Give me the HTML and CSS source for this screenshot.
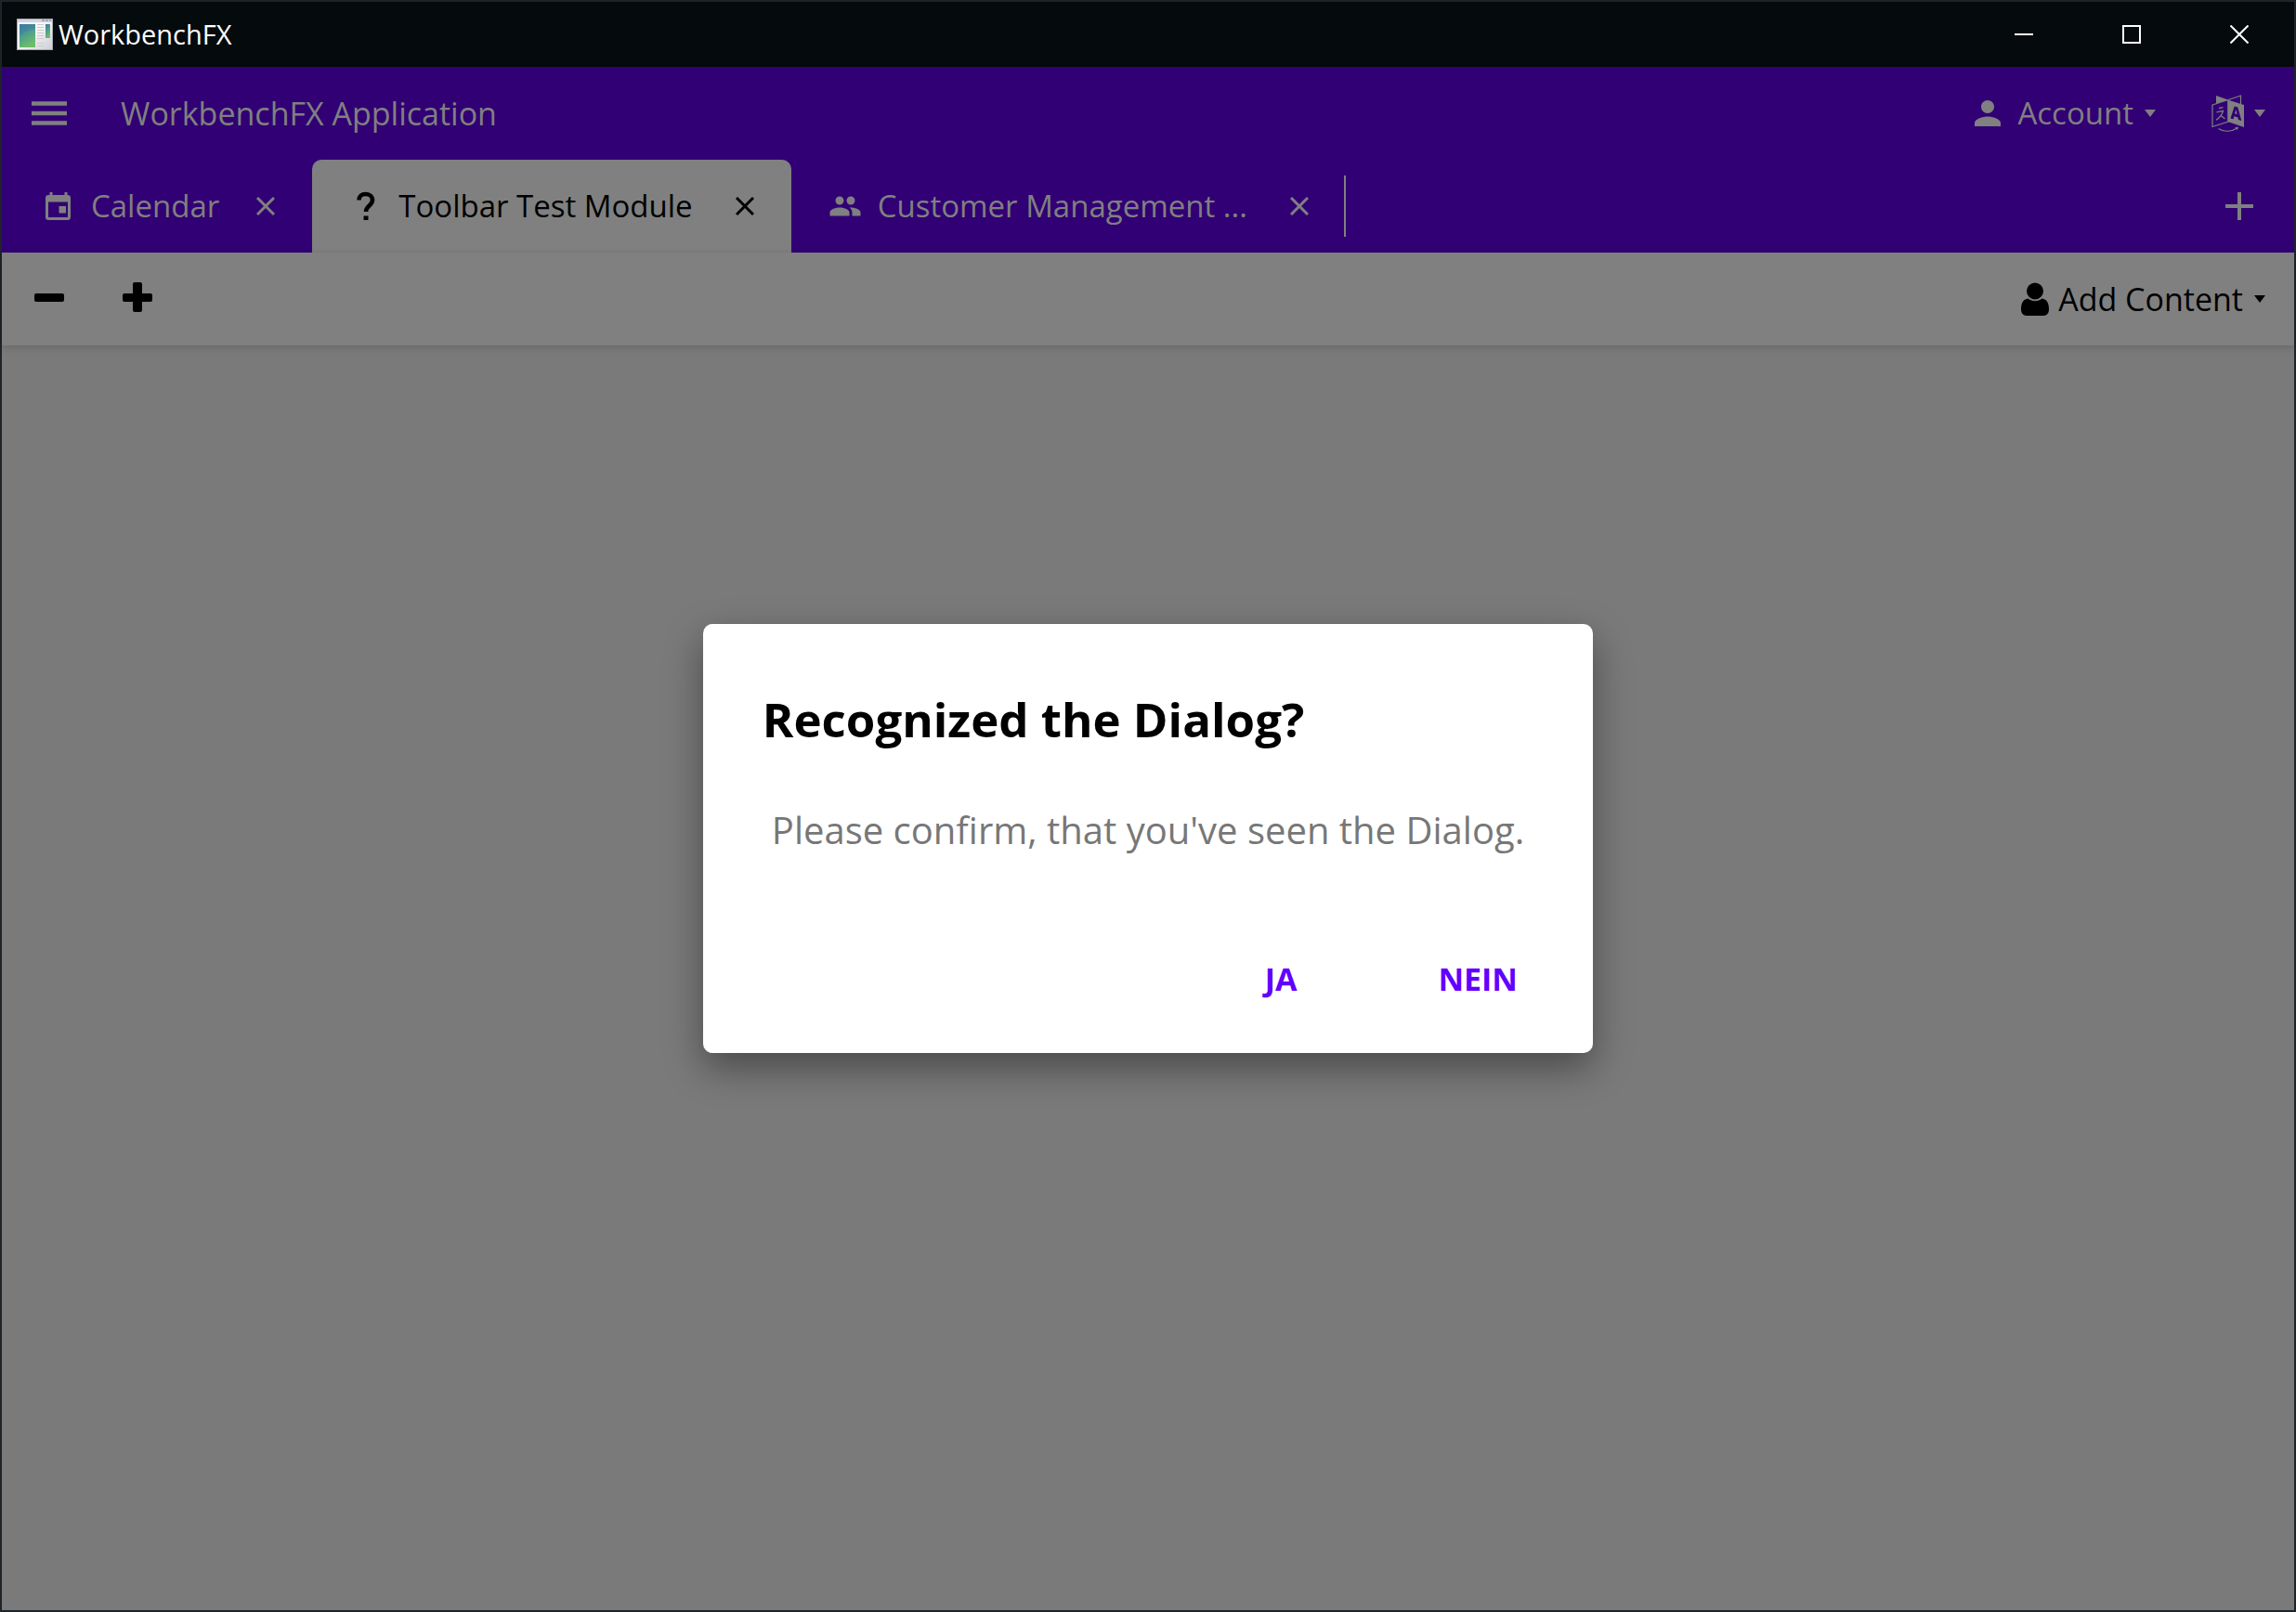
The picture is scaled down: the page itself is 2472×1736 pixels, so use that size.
FILE: index.html
```html
<!DOCTYPE html>
<html lang="en">
<head>
<meta charset="utf-8">
<title>WorkbenchFX</title>
<link rel="stylesheet" href="styles.css">
</head>
<body>
<div class="window">
  <header class="titlebar">
    <svg class="app-icon" viewBox="0 0 39 34" aria-hidden="true">
      <defs>
        <linearGradient id="pane" x1="0" y1="0" x2="0.4" y2="1"><stop offset="0" stop-color="#3f78a0"/><stop offset="0.45" stop-color="#4a9a90"/><stop offset="1" stop-color="#6dbd6c"/></linearGradient>
        <linearGradient id="frame" x1="0" y1="0" x2="1" y2="1"><stop offset="0.4" stop-color="#fafafa"/><stop offset="1" stop-color="#cdced4"/></linearGradient>
      </defs>
      <rect x="0.5" y="0.5" width="38" height="33" fill="url(#frame)" stroke="#a9a9b3"/>
      <rect x="1" y="1" width="37" height="3" fill="#d3d4de"/>
      <path d="M27 2h3M31 2h3M35 2h2" stroke="#a8a4b4" stroke-width="2"/>
      <rect x="3" y="6" width="17" height="25" fill="url(#pane)"/>
      <path d="M3 19C9 13 14 12 20 11V6H3z" fill="#3d7aa6" opacity="0.45"/>
      <path d="M22 6.500h7M22 9.500h7M22 12.500h7M22 15.500h7M22 18.500h7M22 21.500h7M22 26.500h7M22 29.500h7" stroke="#cccccf"/>
      <rect x="31" y="6" width="5" height="15" fill="url(#pane)"/>
    </svg>
    <h1 class="titlebar-text">WorkbenchFX</h1>
    <div class="window-buttons">
      <button class="window-button" aria-label="Minimize"><svg viewBox="0 0 20 20"><path d="M0 10h20"/></svg></button>
      <button class="window-button" aria-label="Maximize"><svg viewBox="0 0 20 20"><path d="M1 1h18v18H1z"/></svg></button>
      <button class="window-button" aria-label="Close"><svg viewBox="0 0 20 20"><path d="M0.500 0.500l19 19M19.500 0.500l-19 19"/></svg></button>
    </div>
  </header>

  <div class="workbench">
    <div class="appbar">
      <button class="menu-button" aria-label="Menu"><svg viewBox="0 0 38 26"><path d="M0 2.500h38M0 13h38M0 23.500h38" stroke="currentColor" stroke-width="4.400"/></svg></button>
      <span class="app-title">WorkbenchFX Application</span>
      <button class="dropdown account">
        <svg class="icon-account" viewBox="4 4 16 16"><path d="M12 12c2.210 0 4-1.790 4-4s-1.790-4-4-4-4 1.790-4 4 1.790 4 4 4zm0 2c-2.670 0-8 1.340-8 4v2h16v-2c0-2.660-5.330-4-8-4z"/></svg>
        <span>Account</span>
        <svg class="caret" viewBox="0 0 12 8"><path d="M0 0h12L6 8z"/></svg>
      </button>
      <button class="dropdown language" aria-label="Language">
        <svg class="icon-language" viewBox="0 0 36 40">
          <path d="M5 1l13 4.500-13 4z"/>
          <path d="M18 5.500L31.500 1v9M1 11l17-5.500V29L1 34.500z" fill="none" stroke="currentColor" stroke-width="1.200"/>
          <path d="M17.500 5.500L35 11V35L17.500 29z"/>
          <path class="cutout" fill-rule="evenodd" d="M20.500 25.500l4.200-13 3.600 1 4 14.500-3.200-.9-.7-2.600-4.100-1.200-.7 3zM25 20.200l2.700.8-1.300-5z"/>
          <path d="M8 14.500l4.500-.8M5.500 18.800l7-1.500c-1 4-4 7.500-7.500 10M9.500 22l5 4" fill="none" stroke="currentColor" stroke-width="1.300"/>
          <path d="M7.500 36.500c6 4 14 3.500 20-.5" fill="none" stroke="currentColor" stroke-width="1.100"/>
          <path d="M25 35.500l4-1-1 3.500z"/>
        </svg>
        <svg class="caret" viewBox="0 0 12 8"><path d="M0 0h12L6 8z"/></svg>
      </button>
    </div>

    <nav class="tabs">
      <div class="tab">
        <svg class="tab-icon" viewBox="0 0 36 36"><path d="M26 18h-7.500v7.500H26zM24.500 3v3h-13V3h-3v3H7c-1.700 0-3 1.300-3 3v21c0 1.700 1.300 3 3 3h21c1.700 0 3-1.300 3-3V9c0-1.700-1.300-3-3-3h-.5V3zM28 30H7V13.500h21z"/></svg>
        <a class="tab-name" href="#calendar">Calendar</a>
        <button class="tab-close" aria-label="Close Calendar"><svg viewBox="0 0 20 20"><path d="M1 1l18 18M19 1L1 19"/></svg></button>
      </div>
      <div class="tab tab-active">
        <svg class="tab-icon" viewBox="0 0 36 36"><path d="M10.500 11.500C10.500 7.500 13.500 5 17.500 5s7.500 2.500 7.500 6.500c0 5.500-7 6.500-7 12.500" fill="none" stroke="currentColor" stroke-width="4.600"/><path d="M15.500 28.500h5V33h-5z"/></svg>
        <a class="tab-name" href="#toolbar">Toolbar Test Module</a>
        <button class="tab-close" aria-label="Close Toolbar Test Module"><svg viewBox="0 0 20 20"><path d="M1 1l18 18M19 1L1 19"/></svg></button>
      </div>
      <div class="tab tab-last">
        <svg class="tab-icon" viewBox="0 0 24 24"><path d="M16 11c1.660 0 2.990-1.340 2.990-3S17.660 5 16 5c-1.660 0-3 1.340-3 3s1.340 3 3 3zm-8 0c1.660 0 2.990-1.340 2.990-3S9.660 5 8 5C6.340 5 5 6.340 5 8s1.340 3 3 3zm0 2c-2.330 0-7 1.170-7 3.500V19h14v-2.500c0-2.330-4.670-3.500-7-3.500zm8 0c-.29 0-.62.020-.97.050 1.160.84 1.970 1.970 1.970 3.450V19h6v-2.500c0-2.330-4.670-3.500-7-3.500z"/></svg>
        <a class="tab-name" href="#customers">Customer Management ...</a>
        <button class="tab-close" aria-label="Close Customer Management"><svg viewBox="0 0 20 20"><path d="M1 1l18 18M19 1L1 19"/></svg></button>
      </div>
      <button class="add-tab" aria-label="Add module"><svg viewBox="0 0 30 30"><path d="M15 0v30M0 15h30" stroke="currentColor" stroke-width="4"/></svg></button>
    </nav>

    <div class="toolbar">
      <button class="tool" aria-label="Remove"><svg viewBox="0 0 32 32"><rect y="12" width="32" height="9" rx="2"/></svg></button>
      <button class="tool" aria-label="Add"><svg viewBox="0 0 32 32"><rect y="12" width="32" height="9" rx="2"/><rect x="11" width="10" height="32" rx="2"/></svg></button>
      <button class="dropdown content-menu">
        <svg class="icon-user" viewBox="0 0 30 36"><circle cx="15" cy="9.500" r="9"/><path d="M7.500 17.500c4.500 3.500 10.500 3.500 15 0C28 18 30 23 30 29c0 4-2 7-6 7H6c-4 0-6-3-6-7 0-6 2-11 7.500-11.500z"/></svg>
        <span>Add Content</span>
        <svg class="caret" viewBox="0 0 12 8"><path d="M0 0h12L6 8z"/></svg>
      </button>
    </div>

    <main class="content"></main>

    <div class="overlay">
      <section class="dialog" role="dialog" aria-labelledby="dialog-title">
        <h2 class="dialog-title" id="dialog-title">Recognized the Dialog?</h2>
        <p class="dialog-message">Please confirm, that you've seen the Dialog.</p>
        <div class="dialog-actions">
          <button class="dialog-button">JA</button>
          <button class="dialog-button">NEIN</button>
        </div>
      </section>
    </div>
  </div>
</div>
</body>
</html>
```
FILE: styles.css
```css
* {
  box-sizing: border-box;
}

body {
  margin: 0;
  font-family: "Open Sans", "Noto Sans", sans-serif;
  font-size: 34px;
  line-height: 48px;
}

button {
  border: 0;
  padding: 0;
  background: none;
  color: inherit;
  font: inherit;
}

a {
  color: inherit;
  text-decoration: none;
}

svg {
  display: block;
  flex: none;
  fill: currentColor;
}

.window {
  display: flex;
  flex-direction: column;
  min-height: 100vh;
  border: 2px solid #1e2428;
  background: #7a7a7a;
}

/* Title bar */
.titlebar {
  display: flex;
  align-items: center;
  gap: 6px;
  height: 70px;
  padding: 0 1px 0 16px;
  background: #050a0c;
  color: #fff;
}

.app-icon {
  width: 39px;
  height: 34px;
}

.titlebar-text {
  margin: 0;
  font-size: 29px;
  font-weight: 400;
}

.window-buttons {
  display: flex;
  height: 100%;
  margin-left: auto;
}

.window-button {
  display: grid;
  place-items: center;
  width: 116px;
}

.window-button svg {
  width: 20px;
  height: 20px;
  fill: none;
  stroke: currentColor;
  stroke-width: 2;
}

/* Workbench */
.workbench {
  position: relative;
  display: flex;
  flex: 1;
  flex-direction: column;
}

.appbar,
.tabs {
  display: flex;
  align-items: center;
  height: 100px;
  background: #310074;
  color: #808080;
}

.appbar {
  padding: 0 31px 0 32px;
}

.menu-button svg {
  width: 38px;
  height: 26px;
}

.app-title {
  margin: 0 auto 0 58px;
}

.dropdown {
  display: flex;
  align-items: center;
}

.dropdown .caret {
  width: 12px;
  height: 8px;
  margin-left: 12px;
}

.account {
  font-size: 33px;
}

.icon-account {
  width: 28px;
  height: 28px;
  margin-right: 18px;
}

.language {
  margin-left: 60px;
}

.language .caret {
  margin-left: 10px;
}

.icon-language {
  width: 36px;
  height: 40px;
}

.cutout {
  fill: #310074;
}

/* Tabs */
.tabs {
  padding-left: 3px;
  font-size: 33px;
}

.tab {
  display: flex;
  align-items: center;
  height: 100%;
  padding: 0 40px;
}

.tab-active {
  border-radius: 10px 10px 0 0;
  background: #808080;
  color: #000;
}

.tab-last {
  position: relative;
}

.tab-last::after {
  position: absolute;
  top: 17px;
  right: 0;
  width: 2px;
  height: 66px;
  background: #808080;
  content: "";
}

.tab-icon {
  width: 36px;
  height: 36px;
}

.tab-name {
  margin: 0 40px 0 17px;
}

.tab + .tab .tab-name {
  margin-right: 46px;
}

.tab-close svg {
  width: 20px;
  height: 20px;
  fill: none;
  stroke: currentColor;
  stroke-width: 3;
}

.add-tab {
  margin: 0 44px 0 auto;
}

.add-tab svg {
  width: 30px;
  height: 30px;
}

/* Module toolbar */
.toolbar {
  z-index: 1;
  display: flex;
  align-items: center;
  gap: 63px;
  height: 100px;
  padding: 0 31px 0 35px;
  background: #808080;
  box-shadow: 0 2px 8px rgba(0, 0, 0, 0.16);
}

.tool {
  padding-bottom: 4px;
}

.tool svg {
  width: 32px;
  height: 32px;
}

.content-menu {
  margin-left: auto;
}

.icon-user {
  width: 30px;
  height: 36px;
  margin-right: 10px;
}

.content {
  flex: 1;
}

/* Dialog */
.overlay {
  position: absolute;
  inset: 0;
  z-index: 2;
  display: grid;
  place-items: center;
}

.dialog {
  padding: 64px 64px 42px;
  border-radius: 10px;
  background: #fff;
  box-shadow: 0 16px 40px rgba(0, 0, 0, 0.4);
}

.dialog-title {
  margin: 0;
  color: #000;
  font-size: 51px;
  line-height: 76px;
}

.dialog-message {
  margin: 52px 10px 92px;
  color: #777;
  font-size: 40px;
  line-height: 60px;
}

.dialog-actions {
  display: flex;
  justify-content: flex-end;
  gap: 92px;
}

.dialog-button {
  min-width: 120px;
  height: 76px;
  color: #6200ff;
  font-weight: 700;
}
```
